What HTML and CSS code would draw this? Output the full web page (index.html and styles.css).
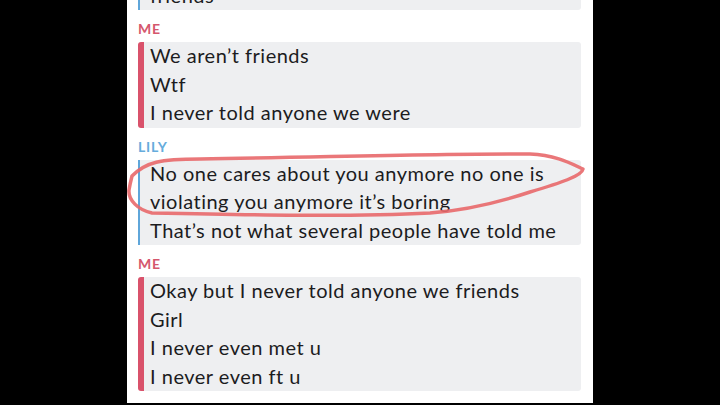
FILE: index.html
```
<!DOCTYPE html>
<html>
<head>
    <title>Chat</title>
    <link rel="stylesheet" href="styles.css">
</head>
<body>
    <div class="screen">
        <div class="chat">
            <div class="msg lily cut">
                <p>friends</p>
            </div>

            <div class="name me">ME</div>
            <div class="msg me">
                <p>We aren’t friends</p>
                <p>Wtf</p>
                <p>I never told anyone we were</p>
            </div>

            <div class="name lily">LILY</div>
            <div class="msg lily">
                <p>No one cares about you anymore no one is</p>
                <p>violating you anymore it’s boring</p>
                <p>That’s not what several people have told me</p>
            </div>

            <div class="name me">ME</div>
            <div class="msg me">
                <p>Okay but I never told anyone we friends</p>
                <p>Girl</p>
                <p>I never even met u</p>
                <p>I never even ft u</p>
            </div>
        </div>

        <!-- hand drawn circle over the screenshot -->
        <svg class="scribble" width="720" height="405" viewBox="0 0 720 405">
            <path d="M 132 176 C 146 162, 160 159, 200 159 C 330 157, 450 153, 530 154 C 555 155, 570 163, 583 169 C 582 176, 560 183, 530 192 C 500 202, 470 210, 430 213 C 350 217, 250 215, 152 213 C 138 210, 128 200, 129 190 C 130 184, 131 180, 132 176 Z"/>
        </svg>
    </div>
</body>
</html>
```

FILE: styles.css
```
body {
    margin: 0;
    background-color: #000;
    font-family: Lato, "Open Sans", sans-serif;
    overflow: hidden;
}
.screen {
    position: relative;
    width: 720px;
    height: 405px;
}
.chat {
    width: 466px;
    height: 403px;
    margin: 0 auto;
    padding: 0 12px 0 11px;
    box-sizing: border-box;
    background-color: #fff;
    overflow: hidden;
}
.name {
    font-size: 14px;
    font-weight: bold;
    line-height: 16px;
    letter-spacing: 0.8px;
    margin: 11px 0 5px;
}
.name.me {
    color: #d5576d;
}
.name.lily {
    color: #66acdc;
}
.msg {
    background-color: #eeeff1;
    border-radius: 3px;
    color: #1c1c1e;
    font-size: 20px;
    line-height: 28.5px;
    letter-spacing: 0.5px;
}
.msg p {
    margin: 0;
    position: relative;
    top: -1px;
}
.msg.me {
    border-left: 6px solid #d9526b;
    padding-left: 6px;
}
.msg.lily {
    border-left: 2px solid #5fa6da;
    border-radius: 0 3px 3px 0;
    padding-left: 10px;
}
.msg.cut {
    margin-top: -18.5px;
}
.scribble {
    position: absolute;
    left: 0;
    top: 0;
    pointer-events: none;
}
.scribble path {
    fill: none;
    stroke: #e8686a;
    stroke-width: 3.5;
    stroke-linecap: round;
    stroke-linejoin: round;
    opacity: 0.9;
}
```
